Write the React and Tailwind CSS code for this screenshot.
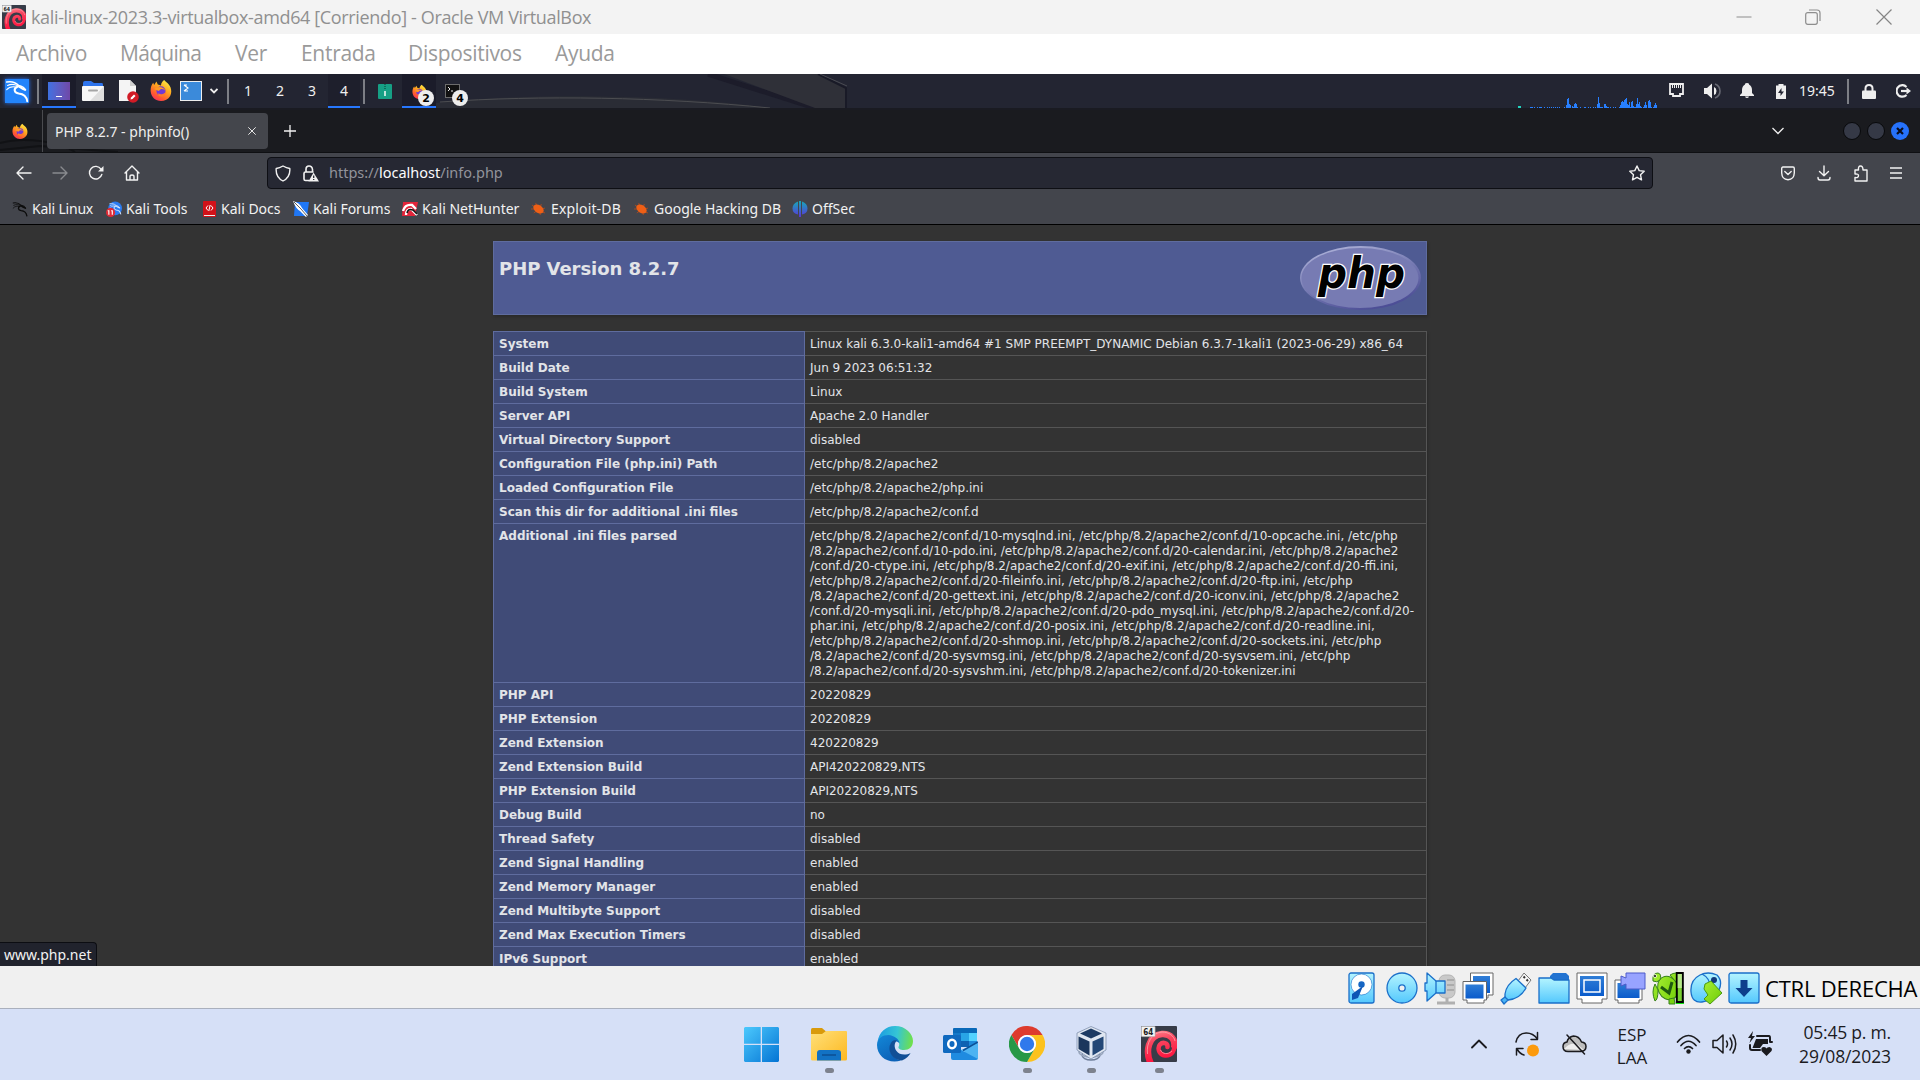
import React from "react";

const UI = "font-['Noto_Sans',sans-serif]";
const WIN = "font-['Open_Sans',sans-serif]";

function T({ className = "", children }) {
  return <span className={`block shrink-0 whitespace-nowrap ${className}`}>{children}</span>;
}

function Svg({ className = "", box = "0 0 24 24", children }) {
  return (
    <svg className={`block shrink-0 ${className}`} viewBox={box} fill="none" preserveAspectRatio="none">
      {children}
    </svg>
  );
}

function Swirl({ className }) {
  return (
    <Svg className={className} box="0 0 36 36">
      <defs>
        <linearGradient id="swirl" gradientUnits="userSpaceOnUse" x1="10" y1="2" x2="18" y2="36">
          <stop offset="0" stopColor="#ff9299" />
          <stop offset="0.4" stopColor="#f8455f" />
          <stop offset="1" stopColor="#ff0f3c" />
        </linearGradient>
      </defs>
      <rect width="36" height="36" rx="1" fill="#373c48" />
      <path d="M10 38C4 26 7 9 21 8C30 7.500 35 14 33 22" stroke="url(#swirl)" strokeWidth="6.500" />
      <path d="M33 16C35 25 30 30 24 29.500C18 29 16 22 19 18.500C22 15.500 27 17 26.500 21" stroke="url(#swirl)" strokeWidth="4.500" strokeLinecap="round" />
      <path d="M6.500 28C5 17 11 6.500 21 6C28 6 33 10 34 15M31 25C27 29 21 28 19.500 24" stroke="#ffb0b4" strokeWidth="0.900" opacity=".8" />
      <rect x="0.200" y="0.200" width="14" height="10.500" rx="0.800" fill="#f3f3f3" stroke="#8b8b8b" strokeWidth="0.500" />
      <text x="2.200" y="8.600" fontSize="8.500" fontWeight="700" fontFamily="DejaVu Sans, sans-serif" textLength="10" lengthAdjust="spacingAndGlyphs" fill="#222">64</text>
    </Svg>
  );
}

function Firefox({ className }) {
  return (
    <Svg className={className} box="0 0 24 24">
      <defs>
        <linearGradient id="fox" x1="0.8" y1="0" x2="0.2" y2="1">
          <stop offset="0" stopColor="#fff04a" />
          <stop offset="0.4" stopColor="#ffa71e" />
          <stop offset="0.75" stopColor="#ff5a30" />
          <stop offset="1" stopColor="#f52a63" />
        </linearGradient>
      </defs>
      <path d="M15.500 1C17 3 19 4 20.500 6C23 9 24.300 14 22 18.500C20 22 16 24 12 24C6 24 1.500 20 0.800 14C0.300 10 1.500 6.500 3.500 4L4.500 6.500L7 2.800L8.500 6L12 7C12 4.500 13.500 2.500 15.500 1Z" fill="url(#fox)" />
      <circle cx="12" cy="13" r="5" fill="#7139d4" />
      <path d="M7 9.500C10 8 15 8.500 17 13C16 11.500 14 10.500 12 11L9.500 13L4.500 11Z" fill="#ff9b25" />
      <path d="M9 15.500C12 17.500 16 16.500 17 13.500C18 18 13 20.500 9 18Z" fill="#ff7a2a" />
    </Svg>
  );
}

function Dragon({ className, tone }) {
  return (
    <Svg className={className} box="0 0 28 28">
      <DragonLines tone={tone} />
    </Svg>
  );
}

function DragonLines({ tone, transform }) {
  return (
    <g stroke={tone} fill="none" strokeLinecap="round" strokeLinejoin="round" transform={transform}>
      <path d="M2 3.500C7 2.500 12 3.500 16 7.500C19 8 22 9 23.500 12.500" strokeWidth="1.800" />
      <path d="M3 7.500C7 5.500 11 6 15 8M2 12.500C5 9 9 8.500 13 9.500" strokeWidth="1.300" />
      <path d="M16 8.500L20 11L23.500 12.500" strokeWidth="2.600" />
      <path d="M14.500 9C9.500 11 10.500 16 16 17C21.500 17.500 25 20 26 26" strokeWidth="2.300" />
    </g>
  );
}

function TitleBar() {
  return (
    <div className={`flex h-[34px] items-center bg-[#f3f3f3] ${WIN}`}>
      <Swirl className="ml-[2px] h-[24px] w-[24px]" />
      <T className="ml-[5px] w-[1704px] text-[18px] tracking-[-0.35px] text-[#909090]">kali-linux-2023.3-virtualbox-amd64 [Corriendo] - Oracle VM VirtualBox</T>
      <Svg className="ml-[1px] h-[16px] w-[16px]" box="0 0 16 16"><path d="M0.500 8H15.500" stroke="#8d8d8d" /></Svg>
      <Svg className="ml-[53px] h-[16px] w-[16px]" box="0 0 16 16">
        <rect x="0.700" y="3.700" width="11.600" height="11.600" rx="2" stroke="#8d8d8d" strokeWidth="1.200" />
        <path d="M4 1H12Q15 1 15 4V12" stroke="#8d8d8d" strokeWidth="1.200" />
      </Svg>
      <Svg className="ml-[55px] h-[16px] w-[16px]" box="0 0 16 16"><path d="M0.500 0.500L15.500 15.500M15.500 0.500L0.500 15.500" stroke="#858585" strokeWidth="1.200" /></Svg>
    </div>
  );
}

function MenuBar() {
  return (
    <div className={`flex h-[40px] items-center bg-white text-[21px] tracking-[-0.3px] text-[#9a9a9a] ${WIN}`}>
      <T className="ml-[16px] w-[104px]">Archivo</T>
      <T className="w-[115px] tracking-[-0.7px]">Máquina</T>
      <T className="w-[66px]">Ver</T>
      <T className="w-[107px]">Entrada</T>
      <T className="w-[147px]">Dispositivos</T>
      <T>Ayuda</T>
    </div>
  );
}

const load = "1 1 1 0 1 0 0 1 0 1 1 1 0 0 1 0 0 1 0 1 0 1 0 1 0 1 0 1 0 1 0 0 0 0 1 0 3 9 10 4 3 0 2 1 4 5 4 1 0 0 1 0 0 0 1 1 0 0 1 0 1 0 0 1 0 1 0 4 11 5 1 1 1 0 4 4 2 1 1 0 1 0 0 1 0 1 0 0 0 1 3 6 7 6 8 9 10 4 3 6 1 6 7 2 1 1 4 10 4 6 2 1 0 1 3 6 3 0 7 8 6 1 0 1 3 5 3".split(" ").map(Number);

function SystemGraph() {
  return (
    <div className="flex h-[34px] w-[139px] shrink-0 items-end">
      <div className="h-[2px] w-[4px] bg-[#22d3c0]" />
      <div className="ml-[9px] flex items-end">
        {load.map((v, i) => (
          <div key={i} className="w-px bg-[#277fff]" style={{ height: v }} />
        ))}
      </div>
    </div>
  );
}

function Badge({ children }) {
  return (
    <span className="absolute left-[16px] top-[16px] flex h-[16px] w-[16px] items-center justify-center rounded-full bg-[#ededed] font-['DejaVu_Sans',sans-serif] text-[11px] font-bold leading-none text-black">{children}</span>
  );
}

function Sep({ className = "" }) {
  return <div className={`h-[25px] w-[2px] shrink-0 bg-[#7d7f86] ${className}`} />;
}

function KaliPanel() {
  return (
    <div className={`relative h-[36px] bg-[#232532] ${UI}`}>
      <svg className="absolute left-0 top-0 block" width="1920" height="36" viewBox="0 0 1920 36" fill="none">
        <path d="M400 35C470 18 670 18 775 35Z" fill="#2a2c35" />
        <path d="M440 28C540 21 660 23 770 34" stroke="#4c4d51" />
        <path d="M708 0L815 34" stroke="#1c1c2a" strokeWidth="5" />
        <path d="M724 0H818L845 14V34H815Z" fill="#2f3038" />
        <path d="M818 0L846 14V34" stroke="#191a27" strokeWidth="2" />
        <path d="M820 0L847 12" stroke="#4a4b52" />
      </svg>
      <div className="relative flex h-[34px] items-center text-[14px] text-[#f0f0f0]">
        <div className="ml-[5px] flex h-[24px] w-[24px] shrink-0 items-center justify-center bg-[#2384fb] shadow-[0_0_4px_#2777ff]">
          <Dragon className="h-[24px] w-[24px]" tone="#fff" />
        </div>
        <Sep className="ml-[8px]" />
        <div className="ml-[3px] flex h-[34px] w-[34px] shrink-0 flex-col items-center border-b-2 border-[#2777ff] bg-[#1b1c2a] pt-[8px]">
          <div className="flex h-[18px] w-[22px] items-end justify-center bg-linear-to-r from-[#3d71e2] to-[#6f48a8] pb-[3px]">
            <div className="h-px w-[6px] bg-white" />
          </div>
        </div>
        <Svg className="ml-[6px] h-[20px] w-[22px]" box="0 0 22 20">
          <path d="M1 2Q1 0 3 0H9L12 2H20Q21 2 21 4V8H1Z" fill="#2e74ec" />
          <rect y="5" width="22" height="15" rx="1" fill="#f7f7f7" />
          <path d="M22 5V20H8Z" fill="#dedede" />
          <rect x="6" y="8.500" width="10" height="2" rx="1" fill="#a5a5a5" />
        </Svg>
        <Svg className="ml-[14px] h-[24px] w-[22px]" box="0 0 22 24">
          <path d="M1 1H12L18 7V22H1Z" fill="#f4f4f4" /><path d="M12 1V7H18Z" fill="#cfcfcf" />
          <circle cx="15" cy="18" r="5.800" fill="#d11b26" />
          <path d="M12.500 20.500L13 18.500L16 15.500L17.500 17L14.500 20Z" fill="#fff" />
        </Svg>
        <Firefox className="mb-[2px] ml-[10px] h-[22px] w-[22px]" />
        <Svg className="ml-[8px] h-[20px] w-[22px]" box="0 0 22 20">
          <rect x="0.500" y="0.500" width="21" height="19" fill="#3b8ada" stroke="#eee" />
          <path d="M4 4L8 7L4 10M4 4H7M4 10H8" stroke="#fff" strokeWidth="1.100" />
        </Svg>
        <Svg className="ml-[8px] h-[8px] w-[8px]" box="0 0 8 8"><path d="M0.500 2L4 5.500L7.500 2" stroke="#eee" strokeWidth="1.800" /></Svg>
        <Sep className="ml-[9px]" />
        <T className="mb-[2px] ml-[3px] w-[32px] text-center">1</T>
        <T className="mb-[2px] w-[32px] text-center">2</T>
        <T className="mb-[2px] w-[32px] text-center">3</T>
        <div className="flex h-[34px] w-[32px] shrink-0 items-center justify-center border-b-2 border-[#2777ff] bg-[#1e1f2c]"><T>4</T></div>
        <Sep className="ml-[3px]" />
        <Svg className="ml-[13px] h-[15px] w-[14px]" box="0 0 14 15">
          <rect width="14" height="15" rx="1" fill="#16a085" />
          <path d="M7 0V6" stroke="#0c5c4c" strokeWidth="1.500" strokeDasharray="1 1" /><rect x="6" y="7" width="2" height="5" fill="#bfe5dc" />
        </Svg>
        <div className="relative ml-[10px] h-[34px] w-[34px] shrink-0 border-b-2 border-[#2777ff] bg-[#1b1c2a] pl-[10px] pt-[10px]">
          <Firefox className="h-[15px] w-[15px]" />
          <Badge>2</Badge>
        </div>
        <div className="relative h-[34px] w-[34px] shrink-0 pl-[9px] pt-[10px]">
          <Svg className="h-[14px] w-[15px]" box="0 0 15 14"><rect x="0.500" y="0.500" width="14" height="13" fill="#111" stroke="#6c6c6c" /><path d="M3 3L5 5L3 7M6 7H8" stroke="#eee" /></Svg>
          <Badge>4</Badge>
        </div>
        <div className="ml-[1048px]"><SystemGraph /></div>
        <Svg className="mb-[2px] ml-[12px] h-[14px] w-[15px]" box="0 0 15 14">
          <path d="M1 1H14V11H11V13H4V11H1Z" stroke="#eee" strokeWidth="1.800" /><path d="M3.500 2V5M5.500 2V5M7.500 2V5M9.500 2V5M11.500 2V5" stroke="#eee" />
        </Svg>
        <Svg className="ml-[20px] h-[16px] w-[17px]" box="0 0 17 16">
          <path d="M0 5H3L8 0.500V15.500L3 11H0Z" fill="#eee" /><path d="M10 4Q12.500 5 12.500 8T10 12Z" fill="#eee" />
          <path d="M11 1Q16 3 16 8T11 15" stroke="#676973" strokeWidth="1.600" />
        </Svg>
        <Svg className="mb-[2px] ml-[19px] h-[15px] w-[14px]" box="0 0 14 15">
          <path d="M7 0C9 0 9 1 9 1.500Q12 3 12 7V10L14 12V13H0V12L2 10V7Q2 3 5 1.500C5 1 5 0 7 0Z" fill="#eee" /><path d="M5 13.500H9Q8.500 15 7 15T5 13.500Z" fill="#eee" />
        </Svg>
        <Svg className="ml-[22px] h-[15px] w-[10px]" box="0 0 10 15">
          <path d="M2.500 0H7.500V1.500H10V15H0V1.500H2.500Z" fill="#eee" /><path d="M5.500 4L2 9H4.500V12L8 7.500H5.500Z" fill="#232532" />
        </Svg>
        <T className="mb-[2px] ml-[13px] w-[36px]">19:45</T>
        <Sep className="ml-[12px]" />
        <Svg className="ml-[13px] h-[15px] w-[14px]" box="0 0 14 15"><path d="M3.500 7V4.500Q3.500 1 7 1T10.500 4.500V7" stroke="#eee" strokeWidth="2" /><rect y="6.500" width="14" height="8.500" rx="1" fill="#eee" /></Svg>
        <Svg className="ml-[20px] h-[14px] w-[15px]" box="0 0 15 14"><path d="M10.500 3Q8.500 1 6.500 1.100A5.800 5.800 0 1 0 10.500 11" stroke="#eee" strokeWidth="2.200" /><path d="M5 7H12" stroke="#eee" strokeWidth="2.200" /><path d="M10.500 3.500L15 7L10.500 10.500Z" fill="#eee" /></Svg>
      </div>
      <div className="relative h-[2px] bg-[#1a1b22]" />
    </div>
  );
}

function TabBar() {
  return (
    <div className={`relative flex h-[43px] items-center border-b border-[#0f1013] bg-[#1a1b1f] text-[14px] text-[#eee] ${UI}`}>
      <svg className="absolute left-0 top-0 block" width="130" height="42" viewBox="0 0 130 42" fill="none">
        <path d="M0 33C25 26 60 32 75 42M0 40L40 36L118 42" stroke="#111215" strokeWidth="2" />
      </svg>
      <Firefox className="relative ml-[12px] h-[16px] w-[16px]" />
      <div className="relative ml-[14px] h-[42px] w-px bg-[#4a4b4f]" />
      <div className="relative ml-[4px] flex h-[36px] w-[221px] shrink-0 items-center rounded-[4px] bg-[#44464c]">
        <T className="ml-[8px] w-[193px]">PHP 8.2.7 - phpinfo()</T>
        <Svg className="h-[8px] w-[8px]" box="0 0 8 8"><path d="M0.300 0.300L7.700 7.700M7.700 0.300L0.300 7.700" stroke="#e5e5e5" /></Svg>
      </div>
      <Svg className="ml-[16px] h-[12px] w-[12px]" box="0 0 12 12"><path d="M6 0V12M0 6H12" stroke="#f2f2f2" strokeWidth="1.300" /></Svg>
      <Svg className="ml-auto h-[8px] w-[12px]" box="0 0 12 8"><path d="M0.500 1L6 6.500L11.500 1" stroke="#eee" strokeWidth="1.300" /></Svg>
      <div className="ml-[59px] h-[18px] w-[18px] rounded-full border border-[#08090b] bg-[#353946]" />
      <div className="ml-[6px] h-[18px] w-[18px] rounded-full border border-[#08090b] bg-[#353946]" />
      <div className="ml-[6px] mr-[11px] flex h-[18px] w-[18px] items-center justify-center rounded-full bg-[#2672fb]">
        <Svg className="h-[8px] w-[8px]" box="0 0 8 8"><path d="M1 1L7 7M7 1L1 7" stroke="#0a0d1c" strokeWidth="2.200" /></Svg>
      </div>
    </div>
  );
}

function NavBar() {
  const s = { stroke: "#f2f2f2", strokeWidth: 1.4, strokeLinecap: "round", strokeLinejoin: "round" };
  return (
    <div className={`flex h-[40px] items-center ${UI}`}>
      <Svg className="ml-[16px] h-[16px] w-[16px]" box="0 0 16 16"><path d="M1 8H15M7 2L1 8L7 14" {...s} /></Svg>
      <Svg className="ml-[20px] h-[16px] w-[16px] opacity-40" box="0 0 16 16"><path d="M1 8H15M9 2L15 8L9 14" {...s} /></Svg>
      <Svg className="ml-[20px] h-[16px] w-[16px]" box="0 0 16 16"><path d="M13.800 9.500A6.300 6.300 0 1 1 13 4.200" {...s} /><path d="M15.500 1V6.500H10Z" fill="#f2f2f2" /></Svg>
      <Svg className="ml-[20px] h-[16px] w-[16px]" box="0 0 16 16"><path d="M1 8L8 1L15 8M2.500 7V15H13.500V7M6 15V11.500Q6 10 8 10T10 11.500V15" {...s} /></Svg>
      <div className="ml-[127px] flex h-[32px] w-[1386px] shrink-0 items-center rounded-[4px] border border-[#0e0f14] bg-[#262833]">
        <Svg className="ml-[7px] h-[17px] w-[16px]" box="0 0 16 17"><path d="M8 1Q11.500 3 14.800 3.500Q15.500 12 8 16Q0.500 12 1.200 3.500Q4.500 3 8 1Z" {...s} /></Svg>
        <Svg className="ml-[12px] h-[17px] w-[16px]" box="0 0 16 17"><path d="M3 7V4.500Q3 1 6 1T9.500 4.500V7M6 15.500H2.500Q1 15.500 1 14V8.500Q1 7 2.500 7H10" {...s} strokeWidth="1.600" /><path d="M10.500 7.500L16 16.500H5.500Z" fill="#f2f2f2" /><path d="M10.700 10.500V13M10.700 14V15" stroke="#262833" strokeWidth="1.300" /></Svg>
        <T className="ml-[10px] w-[1300px] text-[14.5px] text-[#92939b]">https://<span className="text-[#fbfbfe]">localhost</span>/info.php</T>
        <Svg className="h-[16px] w-[16px]" box="0 0 16 16"><path d="M8 1L10.200 5.600L15.200 6.200L11.500 9.700L12.500 14.800L8 12.300L3.500 14.800L4.500 9.700L0.800 6.200L5.800 5.600Z" {...s} /></Svg>
      </div>
      <Svg className="ml-[128px] h-[15px] w-[14px]" box="0 0 14 15"><path d="M2 1H12Q13.300 1 13.300 2.500V7Q13 13.500 7 13.700Q1 13.500 0.700 7V2.500Q0.700 1 2 1ZM3.800 5.500L7 8.500L10.200 5.500" {...s} /></Svg>
      <Svg className="ml-[22px] h-[16px] w-[14px]" box="0 0 14 16"><path d="M7 1V10.500M2.500 6.500L7 10.800L11.500 6.500M1 12.500Q1 15 3 15H11Q13 15 13 12.500" {...s} /></Svg>
      <Svg className="ml-[22px] h-[17px] w-[15px]" box="0 0 15 17"><path d="M2 16V12.500Q5.500 13 5.500 10.800T2 9V5H5.500Q5 1 7.500 1T10 5H14V16Z" {...s} /></Svg>
      <Svg className="ml-[22px] h-[12px] w-[12px]" box="0 0 12 12"><path d="M0 1H12M0 6H12M0 11H12" stroke="#f2f2f2" strokeWidth="1.300" /></Svg>
    </div>
  );
}

function Bug({ className }) {
  return (
    <Svg className={className} box="0 0 16 14">
      <path d="M1 3L4 5M5 1L6 4M0 7L4 7M3 11L6 9M11 2L10 5M15 6L12 7M15 11L12 10M10 13L9 10" stroke="#b04a1d" strokeWidth="0.900" />
      <ellipse cx="8" cy="7" rx="6" ry="3.900" transform="rotate(30 8 7)" fill="#ee5f16" />
    </Svg>
  );
}

function Bookmarks() {
  return (
    <div className={`flex h-[31px] items-center text-[14px] text-[#f2f2f2] ${UI}`}>
      <Dragon className="ml-[12px] h-[16px] w-[16px]" tone="#0b0b0b" />
      <T className="ml-[4px] w-[74px] tracking-[-0.2px]">Kali Linux</T>
      <Svg className="h-[16px] w-[16px]" box="0 0 28 28"><circle cx="16" cy="13" r="12" fill="#2b7bf0" /><DragonLines tone="#cfe3ff" transform="translate(5 2) scale(.8)" /><circle cx="8" cy="20" r="8" fill="#e02a35" /><path d="M5 16V24M11 16V24M3 17H6M9 17H12" stroke="#fff" strokeWidth="2" /></Svg>
      <T className="ml-[4px] w-[77px]">Kali Tools</T>
      <Svg className="h-[16px] w-[13px]" box="0 0 13 16"><rect width="13" height="16" rx="1" fill="#d11219" /><path d="M1 14.500H12" stroke="#eee" /><path d="M5 4.500L3 7L5 9.500M8 4.500L10 7L8 9.500M7.200 4L5.800 10" stroke="#fff" /></Svg>
      <T className="ml-[5px] w-[72px]">Kali Docs</T>
      <Svg className="h-[16px] w-[16px]" box="0 0 16 16"><path d="M2 1H16L14 15H1Z" fill="#2077f5" /><path d="M0 0Q7 2 9 7L15 14L13 16L7 10Q3 8 0 0Z" fill="#fff" /><path d="M1 1L8 8L14 15" stroke="#1a1a1a" strokeWidth="0.700" /></Svg>
      <T className="ml-[4px] w-[89px]">Kali Forums</T>
      <Svg className="h-[16px] w-[16px]" box="0 0 16 16"><path d="M1 1H16L13 15H0Z" fill="#e2253a" /><path d="M1 10Q3 3 10 4L14 8M4 14Q4 8 9 8L15 14" stroke="#fff" strokeWidth="2.400" /><path d="M5 12Q6 7 11 9L15 13" stroke="#141414" strokeWidth="1.600" /></Svg>
      <T className="ml-[4px] w-[109px]">Kali NetHunter</T>
      <Bug className="h-[14px] w-[15px]" />
      <T className="ml-[5px] w-[83px] tracking-[0.15px]">Exploit-DB</T>
      <Bug className="h-[14px] w-[15px]" />
      <T className="ml-[5px] w-[138px]">Google Hacking DB</T>
      <Svg className="h-[16px] w-[16px]" box="0 0 16 16">
        <defs><linearGradient id="off" x1="0" y1="0" x2="0" y2="1"><stop stopColor="#16a9b8" /><stop offset="1" stopColor="#5a35d8" /></linearGradient></defs>
        <path d="M6 0.500V13.500Q0.500 12.500 0.500 7.500T6 0.500ZM10 0.500V13.500Q15.500 12.500 15.500 7.500T10 0.500ZM7 0H9V16H7Z" fill="url(#off)" />
      </Svg>
      <T className="ml-[4px]">OffSec</T>
    </div>
  );
}

const iniLines = [
  "/etc/php/8.2/apache2/conf.d/10-mysqlnd.ini, /etc/php/8.2/apache2/conf.d/10-opcache.ini, /etc/php",
  "/8.2/apache2/conf.d/10-pdo.ini, /etc/php/8.2/apache2/conf.d/20-calendar.ini, /etc/php/8.2/apache2",
  "/conf.d/20-ctype.ini, /etc/php/8.2/apache2/conf.d/20-exif.ini, /etc/php/8.2/apache2/conf.d/20-ffi.ini,",
  "/etc/php/8.2/apache2/conf.d/20-fileinfo.ini, /etc/php/8.2/apache2/conf.d/20-ftp.ini, /etc/php",
  "/8.2/apache2/conf.d/20-gettext.ini, /etc/php/8.2/apache2/conf.d/20-iconv.ini, /etc/php/8.2/apache2",
  "/conf.d/20-mysqli.ini, /etc/php/8.2/apache2/conf.d/20-pdo_mysql.ini, /etc/php/8.2/apache2/conf.d/20-",
  "phar.ini, /etc/php/8.2/apache2/conf.d/20-posix.ini, /etc/php/8.2/apache2/conf.d/20-readline.ini,",
  "/etc/php/8.2/apache2/conf.d/20-shmop.ini, /etc/php/8.2/apache2/conf.d/20-sockets.ini, /etc/php",
  "/8.2/apache2/conf.d/20-sysvmsg.ini, /etc/php/8.2/apache2/conf.d/20-sysvsem.ini, /etc/php",
  "/8.2/apache2/conf.d/20-sysvshm.ini, /etc/php/8.2/apache2/conf.d/20-tokenizer.ini",
];

const rows = [
  ["System", ["Linux kali 6.3.0-kali1-amd64 #1 SMP PREEMPT_DYNAMIC Debian 6.3.7-1kali1 (2023-06-29) x86_64"]],
  ["Build Date", ["Jun 9 2023 06:51:32"]],
  ["Build System", ["Linux"]],
  ["Server API", ["Apache 2.0 Handler"]],
  ["Virtual Directory Support", ["disabled"]],
  ["Configuration File (php.ini) Path", ["/etc/php/8.2/apache2"]],
  ["Loaded Configuration File", ["/etc/php/8.2/apache2/php.ini"]],
  ["Scan this dir for additional .ini files", ["/etc/php/8.2/apache2/conf.d"]],
  ["Additional .ini files parsed", iniLines],
  ["PHP API", ["20220829"]],
  ["PHP Extension", ["20220829"]],
  ["Zend Extension", ["420220829"]],
  ["Zend Extension Build", ["API420220829,NTS"]],
  ["PHP Extension Build", ["API20220829,NTS"]],
  ["Debug Build", ["no"]],
  ["Thread Safety", ["disabled"]],
  ["Zend Signal Handling", ["enabled"]],
  ["Zend Memory Manager", ["enabled"]],
  ["Zend Multibyte Support", ["disabled"]],
  ["Zend Max Execution Timers", ["disabled"]],
  ["IPv6 Support", ["enabled"]],
];

function PhpLogo() {
  return (
    <Svg className="h-[64px] w-[121px]" box="0 0 121 64">
      <defs>
        <linearGradient id="rim" x1="0.2" y1="0" x2="0.7" y2="1"><stop stopColor="#b0b4da" /><stop offset="0.5" stopColor="#777bb3" /><stop offset="1" stopColor="#484993" /></linearGradient>
      </defs>
      <ellipse cx="60.500" cy="32" rx="60.500" ry="32" fill="url(#rim)" />
      <ellipse cx="60" cy="32" rx="58.500" ry="30" fill="#777bb3" />
      <text x="18" y="41.500" fontSize="42" fontWeight="700" fontStyle="italic" fontFamily="DejaVu Sans, sans-serif" textLength="87" lengthAdjust="spacingAndGlyphs" fill="#000" stroke="#fff" strokeWidth="2.600" paintOrder="stroke">php</text>
    </Svg>
  );
}

function PhpInfo() {
  return (
    <div className="relative h-[741px] overflow-hidden bg-[#333333] pl-[493px] pt-[16px] font-['DejaVu_Sans',sans-serif] text-[#e2e4e8]">
      <div className="flex h-[74px] w-[934px] items-start justify-between border border-[#5f6c9e] bg-[#4f5b93] shadow-[1px_2px_3px_rgba(0,0,0,0.2)]">
        <T className="ml-[5px] mt-[16px] text-[18px] font-bold leading-[21px] tracking-[-0.05px]">PHP Version 8.2.7</T>
        <div className="mr-[5px] mt-[4px]"><PhpLogo /></div>
      </div>
      <div className="mt-[16px] w-[934px] border-t border-[#515151] text-[12px] leading-[15px] shadow-[1px_2px_3px_rgba(0,0,0,0.2)]">
        {rows.map(([label, lines]) => (
          <div key={label} className="-mt-px flex">
            <div className="w-[312px] shrink-0 border border-[#5f6c9e] bg-[#404b77] pb-[3px] pl-[5px] pt-[5px] font-bold"><T>{label}</T></div>
            <div className="flex-1 border border-l-0 border-[#555555] pb-[3px] pl-[5px] pt-[5px]">
              {lines.map((l) => <T key={l}>{l}</T>)}
            </div>
          </div>
        ))}
      </div>
      <div className={`absolute bottom-0 left-0 h-[24px] w-[97px] rounded-tr-[4px] border-r border-t border-[#0c0d12] bg-[#21232d] pl-[4px] text-[14px] leading-[23px] text-[#f2f2f2] ${UI}`}><T>www.php.net</T></div>
    </div>
  );
}

function StatusBar() {
  const e = { stroke: "#1a6fc9", strokeWidth: 1.3, strokeLinejoin: "round" };
  const c = "h-[33px] w-[32px]";
  return (
    <div className={`flex h-[43px] items-center border-b border-[#aab0bd] bg-[#f0f0f0] pl-[1348px] pt-[2px] ${WIN}`}>
      <svg className="absolute block h-0 w-0"><defs>
        <linearGradient id="sky" x1="0" y1="0" x2="0" y2="1"><stop stopColor="#b4f4ff" /><stop offset="1" stopColor="#54c8fd" /></linearGradient>
        <linearGradient id="deep" x1="0" y1="0" x2="0" y2="1"><stop stopColor="#2f7dd6" /><stop offset="1" stopColor="#0a5bcb" /></linearGradient>
        <linearGradient id="lime" x1="0" y1="0" x2="1" y2="1"><stop stopColor="#a6ee33" /><stop offset="1" stopColor="#6dcc05" /></linearGradient>
      </defs></svg>
      <Svg className="h-[33px] w-[27px]" box="0 0 27 33"><rect x="1" y="1" width="25" height="30" rx="2" fill="url(#sky)" {...e} /><circle cx="13.500" cy="12.500" r="10.500" fill="#fff" {...e} strokeWidth="0.600" /><circle cx="13.500" cy="12.500" r="3.200" fill="#1566c4" /><path d="M15 14L10 26L4 28V22Z" fill="#0e55b5" /></Svg>
      <Svg className={`ml-[11px] ${c}`} box="0 0 32 33"><circle cx="16" cy="16" r="15" fill="url(#sky)" {...e} /><circle cx="16" cy="16" r="3.200" fill="#f0f0f0" {...e} /></Svg>
      <Svg className={`ml-[6px] ${c}`} box="0 0 32 33"><rect x="15" y="3" width="16" height="23" rx="6" fill="#c9c9c9" stroke="#b3b3b3" /><path d="M23 8H30M23 13H30M23 18H30" stroke="#a2a2a2" strokeWidth="1.500" /><path d="M23 26V30M13 31H31" stroke="#b0b0b0" strokeWidth="3" /><path d="M3 1L12 9H21V21H12L3 29V19H1V11H3Z" fill="url(#sky)" {...e} /><path d="M12 9V21" {...e} /></Svg>
      <Svg className={`ml-[6px] ${c}`} box="0 0 32 33"><path d="M8.500 1H31V23H26V26H13V23H8.500Z" fill="#fff" stroke="#666" /><rect x="11" y="4" width="17" height="17" fill="url(#deep)" /><path d="M1 9.500H24.500V28H22V31H5V28H1Z" fill="#fff" stroke="#666" /><rect x="3.500" y="12.500" width="18" height="14" fill="url(#deep)" /></Svg>
      <Svg className={`ml-[6px] ${c}`} box="0 0 32 33"><path d="M18 9L24 1L31 8L25 16Z" fill="#f6f6f6" stroke="#777" /><path d="M22.500 6.500L24 8M25.500 9.500L27 11" stroke="#333" strokeWidth="2" transform="translate(1 -2)" /><path d="M5 22Q6 13 16 6.500L26 16Q20 27 8 28L5 26Z" fill="url(#sky)" {...e} /><path d="M1 28L5 25L8 28L4 32Z" fill="#4ab5f5" {...e} /></Svg>
      <Svg className={`ml-[6px] ${c}`} box="0 0 32 33"><path d="M12 4L15 1H28L31 4V10H12Z" fill="#2273d1" /><path d="M1 6H13L16 8H31V31H1Z" fill="url(#sky)" {...e} /></Svg>
      <Svg className={`ml-[6px] ${c}`} box="0 0 32 33"><path d="M1 1H31V27H26V31H6V27H1Z" fill="#fff" stroke="#666" /><rect x="4" y="4" width="24" height="20" fill="url(#deep)" /><rect x="8" y="8" width="16" height="12" stroke="#fff" strokeWidth="1.500" /></Svg>
      <Svg className={`ml-[6px] ${c}`} box="0 0 32 33"><path d="M1 8H28V28H25V31H4V28H1Z" fill="#fff" stroke="#666" /><rect x="3.500" y="11" width="22" height="15" fill="url(#deep)" /><path d="M12 1H31V17H12V12L7 14V4L12 6Z" fill="#98a3ff" stroke="#4d5bc9" /></Svg>
      <Svg className={`ml-[6px] ${c}`} box="0 0 32 33">
        <ellipse cx="16" cy="16" rx="10" ry="12" transform="rotate(-25 16 16)" fill="url(#lime)" stroke="#37801c" /><path d="M1 9Q0 1 6 1Q10 2 8 8Q5 11 1 9ZM3 12Q-1 20 3 29Q6 28 6 18ZM18 3Q24 -1 30 3L24 10ZM17 27V32H23L22 26Z" fill="url(#lime)" stroke="#37801c" /><circle cx="3" cy="4" r="1.800" fill="#fff" /><circle cx="3" cy="4" r="1" fill="#000" />
        <path d="M9 15L17 21L20 10" stroke="#1e5a10" strokeWidth="3" /><path d="M24 31H32V28" stroke="#12e412" strokeWidth="2" /><rect x="24.800" y="1" width="6" height="29" fill="#7ad032" stroke="#000" strokeWidth="2" /><path d="M25.500 2H30V16H25.500Z" fill="#e6ffd0" opacity=".55" />
      </Svg>
      <Svg className={`ml-[6px] ${c}`} box="0 0 32 33"><path d="M1 20Q0 8 10 3Q18 -1 27 3Q33 9 29 18Q24 29 12 30Q2 31 1 20Z" fill="url(#sky)" {...e} /><path d="M12 2Q20 6 20 15" {...e} /><circle cx="24" cy="8" r="3" fill="#12397a" /><path d="M15 12L21 9L32 21L20 32L14 27L18 23L14 17Z" fill="url(#lime)" stroke="#4b9a12" /></Svg>
      <Svg className={`ml-[6px] ${c}`} box="0 0 32 33"><rect x="1" y="1" width="30" height="30" rx="2" fill="url(#sky)" {...e} /><path d="M12.500 8H19.500V16H24.500L16 25L7.500 16H12.500Z" fill="#0d3f8c" /></Svg>
      <T className="ml-[5px] text-[22px] leading-[30px] tracking-[-0.2px] text-black">CTRL DERECHA</T>
    </div>
  );
}

function RunningApp({ children, w = "w-[36px]" }) {
  return (
    <div className={`flex ${w} shrink-0 flex-col items-center pt-[17px]`}>
      {children}
      <div className="mt-[6px] h-[5px] w-[9px] rounded-full bg-[#7d828e]" />
    </div>
  );
}

function Taskbar() {
  const k = { stroke: "#1b1b1f", strokeWidth: 1.5, strokeLinecap: "round", strokeLinejoin: "round" };
  return (
    <div className={`flex h-[71px] items-start bg-[#d6e0f7] pl-[744px] text-[#1b1b1f] ${WIN}`}>
      <Svg className="mt-[18px] h-[35px] w-[35px]" box="0 0 35 35">
        <defs><linearGradient id="win" gradientUnits="userSpaceOnUse" x1="0" y1="0" x2="35" y2="35"><stop stopColor="#4cc9fd" /><stop offset="1" stopColor="#0474d4" /></linearGradient></defs>
        <path d="M1 0H16.700V16.700H0V1ZM18 0H34L35 1V16.700H18ZM0 18H16.700V35H1L0 34ZM18 18H35V34L34 35H18Z" fill="url(#win)" />
      </Svg>
      <div className="ml-[32px]"><RunningApp>
        <Svg className="h-[36px] w-[36px]" box="0 0 36 36">
          <defs><linearGradient id="fold" x1="0" y1="0" x2="1" y2="1"><stop stopColor="#ffe07a" /><stop offset="1" stopColor="#fdb81f" /></linearGradient></defs>
          <path d="M0 3.500Q0 2 1.500 2H11L15 5.500V12H0Z" fill="#d99a0b" /><path d="M0 8H11L15 5H35Q36 5 36 6V33Q36 34.500 34.500 34.500H1.500Q0 34.500 0 33Z" fill="url(#fold)" />
          <path d="M6 34.500V27Q6 24 9 24H27Q30 24 30 27V34.500Z" fill="#1272c4" /><path d="M11 29H25" stroke="#0c4f93" strokeWidth="1.500" />
        </Svg>
      </RunningApp></div>
      <Svg className="ml-[30px] mt-[17px] h-[36px] w-[36px]" box="0 0 36 36">
        <defs>
          <linearGradient id="eg" x1="0" y1="0.3" x2="1" y2="0.4"><stop stopColor="#1a9be2" /><stop offset="0.55" stopColor="#35c5d5" /><stop offset="1" stopColor="#6fe04c" /></linearGradient>
          <linearGradient id="eb" x1="0" y1="0" x2="0.5" y2="1"><stop stopColor="#1388d8" /><stop offset="1" stopColor="#0c62b8" /></linearGradient>
        </defs>
        <path d="M0.500 16C2 6 9 0 18 0C29 0 36 8 36 15C36 21 32 24 27 24C23 24 21 22.500 21.500 21C24 17 20 13 16 12C8 9 2 12 0.500 16Z" fill="url(#eg)" />
        <path d="M0 19C0 12 6 9 11.500 9C17 9.500 22 13 22.500 17C19 13.500 13 16 13 22C13 28 18 33 24 34.500C12 38.500 0 31 0 19Z" fill="url(#eb)" />
        <path d="M15 15.500C9 22 14 34 25 34.500C29 33 33 29 33.500 27C29 29.500 22 29 19.500 25C17 21.500 17 17 20 14.500C18 14 16 14.500 15 15.500Z" fill="#114f96" />
      </Svg>
      <Svg className="ml-[30px] mt-[18px] h-[34px] w-[35px]" box="0 0 35 34">
        <path d="M10 2Q10 1 11 1H33Q34 1 34 2V18H10Z" fill="#0968b8" /><path d="M10 6H18V14H10Z" fill="#1479c9" /><path d="M18 6H26V14H18Z" fill="#28a4e6" /><path d="M26 6H34V14H26Z" fill="#53d2ff" /><path d="M10 14H26V20H10Z" fill="#0e61b2" /><path d="M26 14H34V18L26 20Z" fill="#1e8adb" />
        <path d="M8 17L22 25L35 16V31Q35 33 33 33H10Q8 33 8 31Z" fill="#1f8be0" /><path d="M18 23L35 16V32Z" fill="#4db3f2" /><path d="M35 15L20 23.500" stroke="#0b4f95" strokeWidth="1.500" />
        <rect y="8" width="18" height="18" rx="1.500" fill="#1069bf" /><ellipse cx="9" cy="17" rx="3.800" ry="4.200" stroke="#fff" strokeWidth="2.500" />
      </Svg>
      <div className="ml-[31px]"><RunningApp>
        <Svg className="h-[36px] w-[36px]" box="0 0 36 36">
          <path d="M2.400 9A18 18 0 0 1 33.600 9H18A9 9 0 0 0 10.200 22.500Z" fill="#dd3b2e" /><path d="M33.600 9A18 18 0 0 1 18 36L25.800 22.500A9 9 0 0 0 18 9Z" fill="#fcc21d" /><path d="M18 36A18 18 0 0 1 2.400 9L10.200 22.500A9 9 0 0 0 25.800 22.500Z" fill="#279847" />
          <circle cx="18" cy="18" r="9" fill="#fff" /><circle cx="18" cy="18" r="7.200" fill="#3079ec" />
        </Svg>
      </RunningApp></div>
      <div className="ml-[28px]"><RunningApp>
        <Svg className="h-[36px] w-[32px]" box="0 0 32 36">
          <ellipse cx="16" cy="29" rx="9" ry="5" stroke="#6d7d98" strokeWidth="1.500" /><ellipse cx="16" cy="26" rx="12" ry="5" stroke="#9aa7bd" strokeWidth="1.500" />
          <path d="M16 0.500L31 7V24L16 33L2 24V7Z" fill="#dfe6f1" stroke="#7485a3" strokeWidth="0.700" /><path d="M16 2.500L27 7.500L16 12.500L5 7.500Z" fill="#1d3a63" /><path d="M3.500 10.500L14.500 15.500V29.500L3.500 23Z" fill="#1c365c" /><path d="M28.500 10.500L17.500 15.500V29.500L28.500 23Z" fill="#234776" />
        </Svg>
      </RunningApp></div>
      <div className="ml-[32px]"><RunningApp><Swirl className="h-[36px] w-[36px]" /></RunningApp></div>

      <Svg className="ml-[294px] mt-[30px] h-[10px] w-[16px]" box="0 0 16 10"><path d="M1 8.500L8 1.500L15 8.500" {...k} strokeWidth="1.800" /></Svg>
      <Svg className="ml-[28px] mt-[22px] h-[26px] w-[25px]" box="0 0 25 26"><path d="M1 11Q3 2 11.500 2Q18 2 22.500 8V1.500M22.500 8.500H16M1.500 24V17.500H8M2 18Q5 23 9 24" {...k} /><circle cx="18" cy="19.500" r="6" fill="#fc9a0d" /></Svg>
      <Svg className="ml-[22px] mt-[25px] h-[21px] w-[25px]" box="0 0 25 21"><path d="M6 17.500H19Q24 17 24 12.500Q24 8.500 19.500 8Q17 2 11.500 2Q6 3 5 8Q1 8.500 1 12.500Q1 17.500 6 17.500Z" fill="#bdbdbd" {...k} /><path d="M2 15Q9 7 16 11L22 16Z" fill="#eee" /><path d="M5 1L22.500 20" {...k} /></Svg>
      <div className="ml-[24px] mt-[14px] w-[42px] text-center text-[17px] leading-[23px]"><T>ESP</T><T>LAA</T></div>
      <Svg className="ml-[23px] mt-[25px] h-[20px] w-[25px]" box="0 0 25 20"><path d="M1.500 8Q12.500 -5 23.500 8M5 11.500Q12.500 3 20 11.500M8.500 14.500Q12.500 10.500 16.500 14.500" {...k} strokeWidth="1.700" /><circle cx="12.500" cy="17.500" r="2.200" fill="#1b1b1f" /></Svg>
      <Svg className="ml-[11px] mt-[24px] h-[22px] w-[25px]" box="0 0 25 22"><path d="M1 7.500H5L11 2V20L5 14.500H1ZM14.500 8Q16.500 11 14.500 14M18 5Q22 11 18 17M21 2Q26.500 11 21 20" {...k} /></Svg>
      <Svg className="ml-[11px] mt-[22px] h-[26px] w-[25px]" box="0 0 25 26"><path d="M5 0L0 7H3L1.500 12L7 5H4Z" fill="#1b1b1f" /><path d="M9 5H21Q22 5 22 7V11H24M2 14V17Q2 19 4 19H12" {...k} strokeWidth="2" /><path d="M8 8H20V13H15L12 17H4.500Z" fill="#1b1b1f" /><path d="M18.500 25L13.500 20Q12.500 16 16 16Q18 16 18.500 17.500Q19 16 21.500 16Q25 17 23.500 20Z" fill="#1b1b1f" /></Svg>
      <div className="ml-auto mr-[29px] mt-[11px] flex flex-col items-end text-[17.5px] leading-[24px] tracking-[-0.1px]"><T className="tracking-[-0.2px]">05:45 p. m.</T><T>29/08/2023</T></div>
    </div>
  );
}

export default function App() {
  return (
    <div className="flex h-[1080px] w-[1920px] flex-col overflow-hidden bg-white">
      <TitleBar />
      <MenuBar />
      <KaliPanel />
      <TabBar />
      <div className="h-[72px] border-b border-black bg-[#43454c]"><NavBar /><Bookmarks /></div>
      <PhpInfo />
      <StatusBar />
      <Taskbar />
    </div>
  );
}
